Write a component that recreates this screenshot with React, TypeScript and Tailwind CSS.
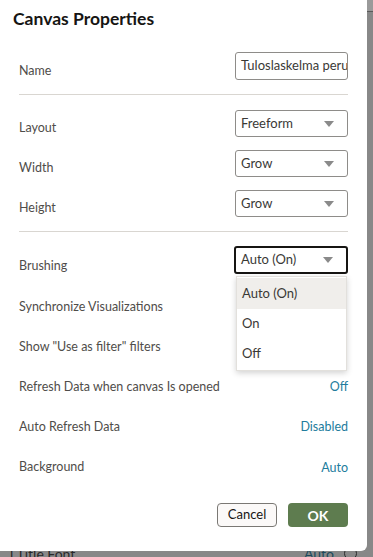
import { useState } from "react";

const font = { fontFamily: 'Lato, "Noto Sans", sans-serif' };

function Caret() {
  return (
    <svg width="10" height="6" viewBox="0 0 10 6" className="shrink-0">
      <path d="M0 0 L10 0 L5 6 Z" fill="#8a8a8a" />
    </svg>
  );
}

function Select({ value }: { value: string }) {
  return (
    <div className="flex h-[27px] w-[113px] items-center justify-between rounded-[3px] border border-[#8e8c89] bg-white pl-[5px] pr-[13px] text-[13px] text-[#3a3936]">
      <span>{value}</span>
      <Caret />
    </div>
  );
}

function LinkRow({ label, value }: { label: string; value: string }) {
  return (
    <div className="flex h-[40px] items-center justify-between">
      <span>{label}</span>
      <span className="text-[#227c9d]">{value}</span>
    </div>
  );
}

export default function App() {
  const [brushing] = useState("Auto (On)");

  return (
    <div
      className="relative h-[557px] w-[373px] overflow-hidden bg-[#888888]"
      style={font}
    >
      {/* page behind the overlay */}
      <div className="absolute bottom-[-7px] left-0 flex w-[367px] items-center justify-between px-[10px] text-[14px] text-[#2a2a2a]">
        <span>l Title Font</span>
        <span className="flex items-center gap-[10px] text-[#1d4a5c]">
          Auto
          <span className="h-[13px] w-[13px] rounded-full border border-[#2a2a2a]" />
        </span>
      </div>
      <div className="absolute right-0 top-0 h-[12px] w-[6px] border-b border-[#5a5a5a] bg-[#9a9a9a]" />

      <div className="relative h-[551px] w-[367px] rounded-br-[6px] bg-white text-[12.5px] text-[#4f4d4a]">
        <h1 className="pl-[13px] pt-[7px] text-[17.5px] font-bold leading-[24px] text-[#161513]">
          Canvas Properties
        </h1>

        <div className="px-[19px]">
          <div className="mt-[21px] flex h-[28px] items-center justify-between">
            <span className="pt-[10px]">Name</span>
            <div className="flex h-[28px] w-[113px] items-center overflow-hidden whitespace-nowrap rounded-[3px] border border-[#8e8c89] pl-[5px] text-[13px] text-[#3a3936]">
              Tuloslaskelma perus
            </div>
          </div>

          <div className="mt-[14px] h-px bg-[#d9d6d1]" />

          <div className="mt-[15px] flex flex-col gap-[13px]">
            {[
              ["Layout", "Freeform"],
              ["Width", "Grow"],
              ["Height", "Grow"],
            ].map(([l, v]) => (
              <div key={l} className="flex h-[27px] items-center justify-between">
                <span className="pt-[9px]">{l}</span>
                <Select value={v} />
              </div>
            ))}
          </div>

          <div className="mt-[14px] h-px bg-[#d9d6d1]" />

          <div className="relative mt-[14px] flex h-[28px] items-center justify-between">
            <span className="pt-[12px]">Brushing</span>
            <div className="w-[114px]">
              <div className="flex h-[28px] items-center justify-between rounded-[3px] border-2 border-[#161513] bg-white pl-[5px] pr-[13px] text-[13px] text-[#3a3936]">
                <span>{brushing}</span>
                <Caret />
              </div>
            </div>
            <div className="absolute right-[1px] top-[30px] z-10 w-[111px] border border-[#e2e0dc] bg-white py-px text-[13px] text-[#3a3936] shadow-[0_2px_6px_rgba(0,0,0,0.18)]">
              <div className="flex h-[31px] items-center bg-[#f0eeeb] pl-[5px]">Auto (On)</div>
              <div className="flex h-[30px] items-center pl-[5px]">On</div>
              <div className="flex h-[30px] items-center pl-[5px]">Off</div>
            </div>
          </div>

          <div className="mt-[13px]">
            <div className="flex h-[40px] items-center">Synchronize Visualizations</div>
            <div className="flex h-[40px] items-center">Show "Use as filter" filters</div>
            <LinkRow label="Refresh Data when canvas Is opened" value="Off" />
            <LinkRow label="Auto Refresh Data" value="Disabled" />
            <div className="flex h-[40px] items-center justify-between">
              <span>Background</span>
              <span className="pt-[2px] text-[#227c9d]">Auto</span>
            </div>
          </div>

          <div className="mt-[16px] flex justify-end gap-[11px]">
            <button className="h-[24px] w-[60px] rounded-[4px] border border-[#7a7874] bg-[#fbf9f8] text-[13px] text-[#161513]">
              Cancel
            </button>
            <button className="h-[24px] w-[60px] rounded-[4px] bg-[#5e7c4f] text-[14px] font-bold text-white">
              OK
            </button>
          </div>
        </div>
      </div>
    </div>
  );
}
